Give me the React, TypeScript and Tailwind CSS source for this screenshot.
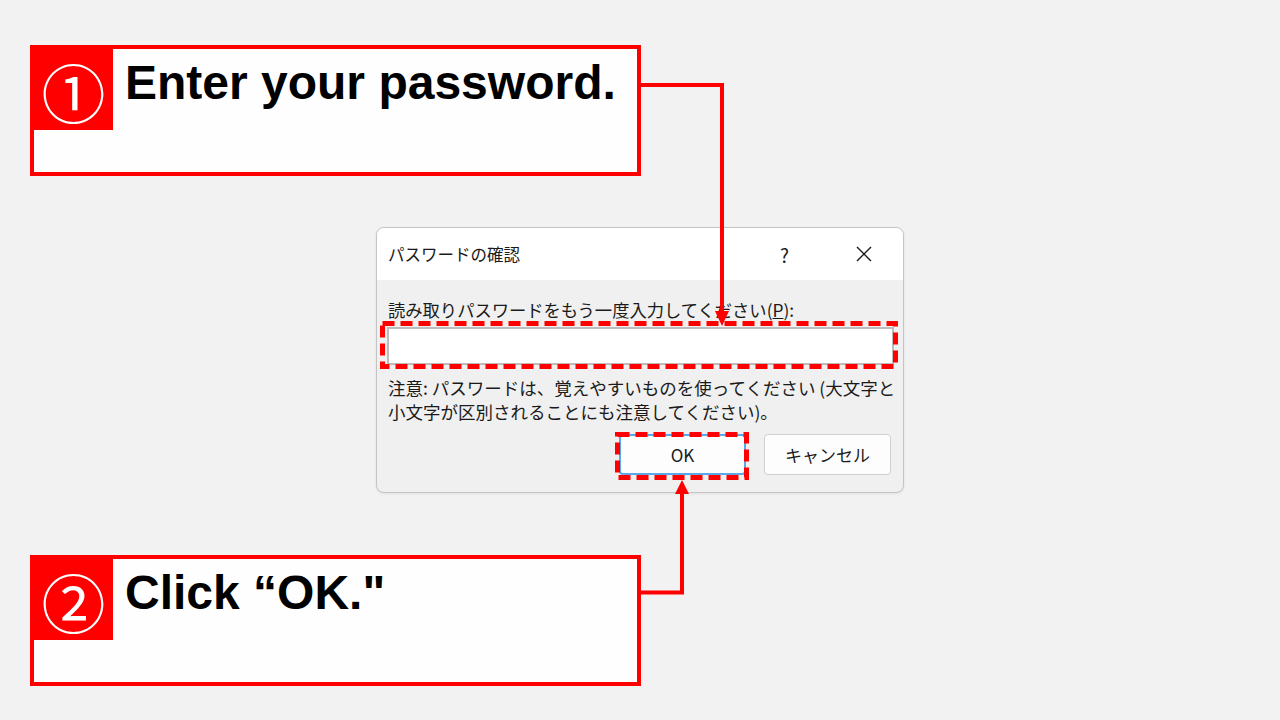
import React from "react"

const jp = "font-['Noto_Sans_CJK_JP',sans-serif]"

function Callout({ num, text }: { num: string; text: string }) {
    return (
        <div className="w-[611px] h-[131px] border-4 border-[#ff0000] bg-[#fefefe] flex items-start">
            <div className={`w-[79px] h-[81px] bg-[#ff0000] flex items-center justify-center text-white text-[64px] leading-none ${jp}`}>
                {num}
            </div>
            <div className="ml-[12px] mt-[10px] text-[48px] leading-[48px] font-bold text-black font-['Liberation_Sans',Arial,sans-serif] whitespace-nowrap">
                {text}
            </div>
        </div>
    )
}

function PasswordDialog() {
    return (
        <div className={`w-[528px] h-[266px] border border-[#c4c4c4] rounded-[8px] overflow-hidden bg-[#f0f0f0] text-[#1a1a1a] ${jp} shadow-[0_1px_3px_rgba(0,0,0,0.08)]`}>
            <div className="h-[52px] bg-white flex items-center pl-[11px] pr-[30px]">
                <span className="text-[16.5px] leading-none">パスワードの確認</span>
                <span className="ml-auto text-[19px] leading-none mr-[66px]">?</span>
                <svg width="18" height="18" viewBox="0 0 18 18" className="shrink-0">
                    <path d="M2 2 L16 16 M16 2 L2 16" stroke="#1a1a1a" strokeWidth="1.4" fill="none" />
                </svg>
            </div>
            <div className="pt-[20px] pl-[10px] pr-[9px]">
                <div className="pl-[1px] text-[17.3px] leading-[20px] whitespace-nowrap">
                    読み取りパスワードをもう一度入力してください(<span className="underline">P</span>):
                </div>
                <div className="mt-[7px] h-[38px] bg-white border-2 border-[#bcbcbc]" />
                <div className="mt-[11px] pl-[1px] text-[17.5px] leading-[24px] whitespace-nowrap">
                    注意: パスワードは、覚えやすいものを使ってください (大文字と<br />
                    小文字が区別されることにも注意してください)。
                </div>
                <div className="mt-[10px] flex justify-end gap-[18px] pr-[3px]">
                    <button className="w-[127px] h-[41px] rounded-[4px] bg-[#fdfdfd] border-2 border-[#5aa8ea] text-[17px] leading-none">
                        OK
                    </button>
                    <button className="w-[127px] h-[41px] rounded-[4px] bg-[#fdfdfd] border border-[#d0d0d0] text-[17px] leading-none">
                        キャンセル
                    </button>
                </div>
            </div>
        </div>
    )
}

export default function App() {
    return (
        <div className="relative w-[1280px] h-[720px] bg-[#f2f2f2] overflow-hidden">
            <div className="pt-[45px] pl-[30px]">
                <Callout num="①" text="Enter your password." />
            </div>
            <div className="mt-[51px] ml-[376px]">
                <PasswordDialog />
            </div>
            <div className="mt-[62px] ml-[30px]">
                <Callout num="②" text={"Click \u201cOK.\""} />
            </div>

            {/* annotation overlay: connectors and dashed highlights */}
            <svg className="absolute inset-0 pointer-events-none" width="1280" height="720" viewBox="0 0 1280 720">
                <path d="M641 85 H722 V314" stroke="#ff0000" strokeWidth="4" fill="none" />
                <polygon points="715,311 729,311 722,326" fill="#ff0000" />
                <path d="M641 592.5 H682 V492" stroke="#ff0000" strokeWidth="4" fill="none" />
                <polygon points="675,494 689,494 682,480" fill="#ff0000" />
                <rect x="382.5" y="323.5" width="513" height="43" fill="none" stroke="#ff0000" strokeWidth="5" strokeDasharray="12 6" />
                <rect x="617.5" y="434.5" width="129" height="43" fill="none" stroke="#ff0000" strokeWidth="5" strokeDasharray="12 6" />
            </svg>
        </div>
    )
}
